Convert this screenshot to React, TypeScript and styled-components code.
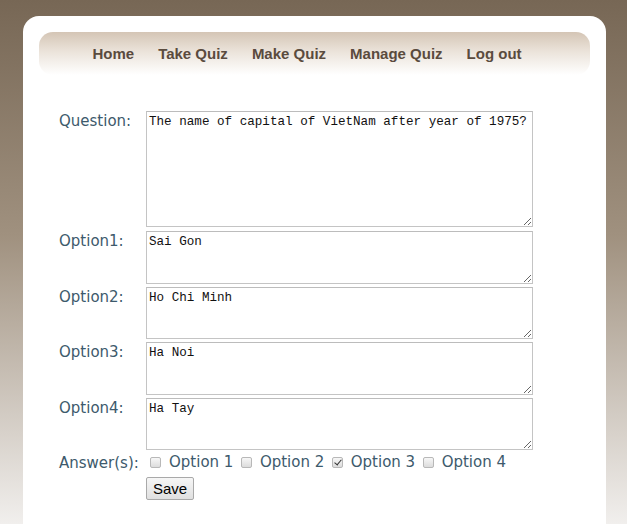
import React from "react";
import styled, { createGlobalStyle } from "styled-components";

const Global = createGlobalStyle`
  html, body { margin: 0; padding: 0; }
  body {
    min-height: 524px;
    background: linear-gradient(to bottom, #776755 0%, #a0917f 45%, #f1efed 100%);
    font-family: "DejaVu Sans", sans-serif;
    overflow: hidden;
  }
`;

const Page = styled.div`
  height: 524px;
  padding: 16px 21px 0 23px;
  box-sizing: border-box;
`;

const Card = styled.div`
  background: #fff;
  border-radius: 16px 16px 0 0;
  width: 583px;
  height: 520px;
  padding: 16px;
  box-sizing: border-box;
`;

const Nav = styled.nav`
  height: 43px;
  border-radius: 14px;
  background: linear-gradient(to bottom, #d4c5b5 0%, #ebe3da 45%, #ffffff 100%);
  display: flex;
  align-items: center;
  justify-content: center;
  gap: 24px;
  padding-right: 15px;
`;

const NavLink = styled.a`
  font-family: "Liberation Sans", Arial, sans-serif;
  font-weight: bold;
  font-size: 15px;
  color: #5a4b3e;
  text-decoration: none;
`;

const Form = styled.form`
  display: grid;
  grid-template-columns: 87px 387px;
  row-gap: 3px;
  margin: 36px 0 0 20px;
  align-items: start;
`;

const Label = styled.label`
  font-size: 15px;
  line-height: 18px;
  color: #3d5a6c;
  padding-top: 1px;
`;

const Area = styled.textarea<{ $h: number; $mb?: number }>`
  width: 387px;
  height: ${(p) => p.$h}px;
  margin: 0 0 ${(p) => p.$mb ?? 0}px 0;
  box-sizing: border-box;
  border: 1px solid #c4c4c4;
  border-top-color: #bcbcbc;
  padding: 3px 2px;
  font-family: "Liberation Mono", monospace;
  font-size: 12.6px;
  line-height: 15px;
  color: #111;
  resize: both;
  outline: none;
`;

const Answers = styled.div`
  display: flex;
  align-items: center;
  font-size: 15px;
  line-height: 18px;
  color: #3d5a6c;
`;

const Check = styled.input.attrs({ type: "checkbox" })`
  appearance: none;
  -webkit-appearance: none;
  position: relative;
  width: 11px;
  height: 11px;
  margin: 0 8px 0 4px;
  box-sizing: border-box;
  border: 1px solid #b8b8b8;
  border-radius: 2px;
  background: linear-gradient(to bottom, #f7f7f7, #dcdcdc);
  &:checked::after {
    content: "";
    position: absolute;
    left: 3px;
    top: 0px;
    width: 3px;
    height: 6px;
    border: solid #333;
    border-width: 0 1.5px 1.5px 0;
    transform: rotate(40deg);
  }
`;

const OptText = styled.span`
  margin-right: 3.5px;
`;

const Save = styled.button`
  width: 48px;
  height: 23px;
  margin-top: 2px;
  font-family: "Liberation Sans", Arial, sans-serif;
  font-size: 15px;
  color: #000;
  background: linear-gradient(to bottom, #f6f6f6, #e0e0e0);
  border: 1px solid #a9a9a9;
  border-radius: 2px;
  padding: 0;
`;

const Spacer = styled.div``;

export default function App() {
  const opts = [
    { label: "Option1:", value: "Sai Gon" },
    { label: "Option2:", value: "Ho Chi Minh" },
    { label: "Option3:", value: "Ha Noi" },
    { label: "Option4:", value: "Ha Tay" },
  ];
  return (
    <>
      <Global />
      <Page>
        <Card>
          <Nav>
            <NavLink href="#">Home</NavLink>
            <NavLink href="#">Take Quiz</NavLink>
            <NavLink href="#">Make Quiz</NavLink>
            <NavLink href="#">Manage Quiz</NavLink>
            <NavLink href="#">Log out</NavLink>
          </Nav>
          <Form onSubmit={(e) => e.preventDefault()}>
            <Label>Question:</Label>
            <Area $h={116} $mb={1} defaultValue="The name of capital of VietNam after year of 1975?" />
            {opts.map((o) => (
              <React.Fragment key={o.label}>
                <Label>{o.label}</Label>
                <Area $h={52.5} defaultValue={o.value} />
              </React.Fragment>
            ))}
            <Label>Answer(s):</Label>
            <Answers>
              <Check />
              <OptText>Option 1</OptText>
              <Check />
              <OptText>Option 2</OptText>
              <Check defaultChecked />
              <OptText>Option 3</OptText>
              <Check />
              <OptText>Option 4</OptText>
            </Answers>
            <Spacer />
            <Save type="submit">Save</Save>
          </Form>
        </Card>
      </Page>
    </>
  );
}
